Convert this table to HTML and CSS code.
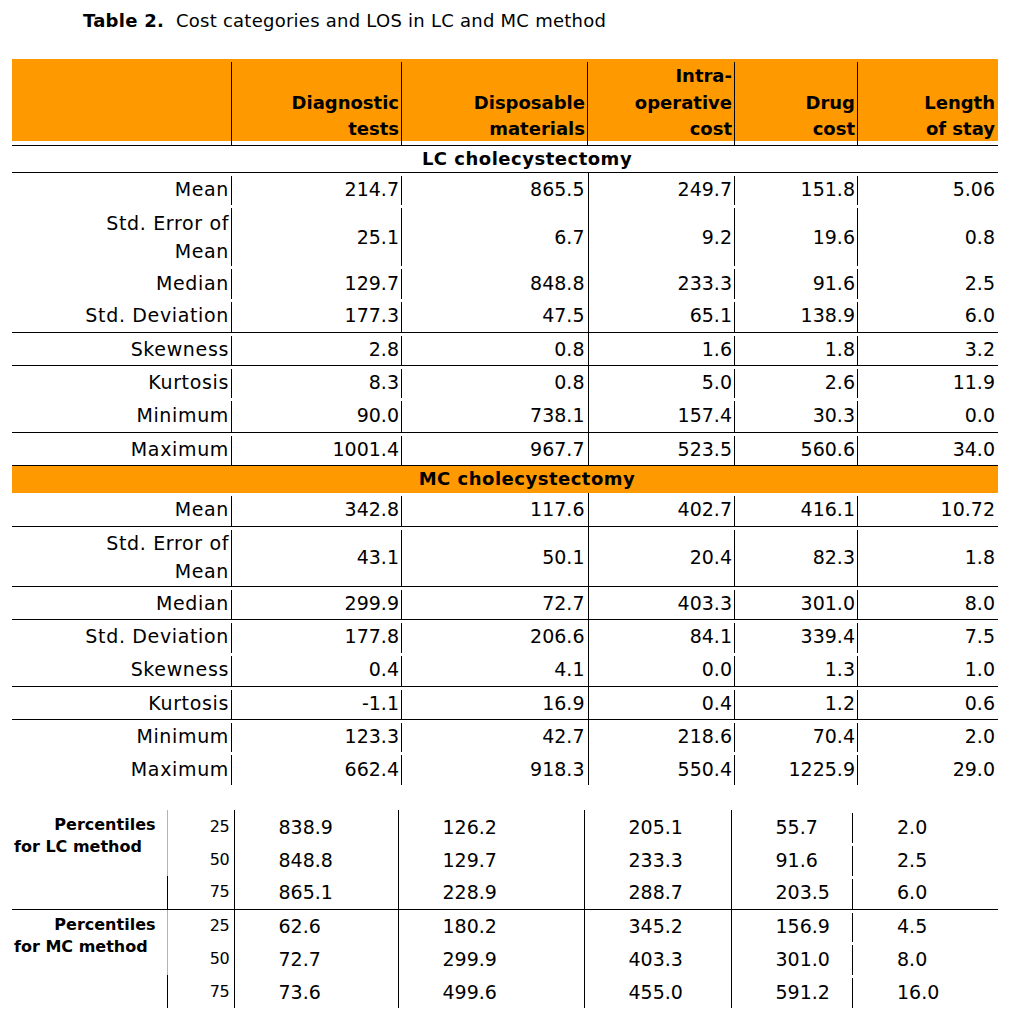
FILE: index.html
```html
<!DOCTYPE html>
<html>
<head>
<meta charset="utf-8">
<title>Table 2</title>
<link rel="stylesheet" href="styles.css">
</head>
<body>
<div class="page">
  <p class="caption"><b>Table 2.</b>&nbsp; Cost categories and LOS in LC and MC method</p>

  <table class="stats">
    <colgroup>
      <col class="w1"><col class="w2"><col class="w3"><col class="w4"><col class="w5"><col class="w6">
    </colgroup>
    <thead>
      <tr>
        <th></th>
        <th>Diagnostic<br>tests</th>
        <th>Disposable<br>materials</th>
        <th>Intra-<br>operative<br>cost</th>
        <th>Drug<br>cost</th>
        <th>Length<br>of stay</th>
      </tr>
    </thead>
    <tbody>
      <tr class="group rule"><td colspan="6">LC cholecystectomy</td></tr>
      <tr><td>Mean</td><td>214.7</td><td>865.5</td><td>249.7</td><td>151.8</td><td>5.06</td></tr>
      <tr class="tall lc"><td>Std. Error of<br>Mean</td><td>25.1</td><td>6.7</td><td>9.2</td><td>19.6</td><td>0.8</td></tr>
      <tr><td>Median</td><td>129.7</td><td>848.8</td><td>233.3</td><td>91.6</td><td>2.5</td></tr>
      <tr class="rule"><td>Std. Deviation</td><td>177.3</td><td>47.5</td><td>65.1</td><td>138.9</td><td>6.0</td></tr>
      <tr class="rule"><td>Skewness</td><td>2.8</td><td>0.8</td><td>1.6</td><td>1.8</td><td>3.2</td></tr>
      <tr><td>Kurtosis</td><td>8.3</td><td>0.8</td><td>5.0</td><td>2.6</td><td>11.9</td></tr>
      <tr class="rule h34"><td>Minimum</td><td>90.0</td><td>738.1</td><td>157.4</td><td>30.3</td><td>0.0</td></tr>
      <tr class="rule"><td>Maximum</td><td>1001.4</td><td>967.7</td><td>523.5</td><td>560.6</td><td>34.0</td></tr>
      <tr class="group orange"><td colspan="6">MC cholecystectomy</td></tr>
      <tr class="rule"><td>Mean</td><td>342.8</td><td>117.6</td><td>402.7</td><td>416.1</td><td>10.72</td></tr>
      <tr class="tall rule"><td>Std. Error of<br>Mean</td><td>43.1</td><td>50.1</td><td>20.4</td><td>82.3</td><td>1.8</td></tr>
      <tr class="rule"><td>Median</td><td>299.9</td><td>72.7</td><td>403.3</td><td>301.0</td><td>8.0</td></tr>
      <tr class="h34"><td>Std. Deviation</td><td>177.8</td><td>206.6</td><td>84.1</td><td>339.4</td><td>7.5</td></tr>
      <tr class="rule"><td>Skewness</td><td>0.4</td><td>4.1</td><td>0.0</td><td>1.3</td><td>1.0</td></tr>
      <tr class="rule"><td>Kurtosis</td><td>-1.1</td><td>16.9</td><td>0.4</td><td>1.2</td><td>0.6</td></tr>
      <tr><td>Minimum</td><td>123.3</td><td>42.7</td><td>218.6</td><td>70.4</td><td>2.0</td></tr>
      <tr><td>Maximum</td><td>662.4</td><td>918.3</td><td>550.4</td><td>1225.9</td><td>29.0</td></tr>
    </tbody>
  </table>

  <table class="pct">
    <colgroup>
      <col class="p1"><col class="p2"><col class="p3"><col class="p4"><col class="p5"><col class="p6"><col class="p7">
    </colgroup>
    <tbody>
      <tr>
        <td class="label" rowspan="2"><span class="l1">Percentiles</span><span class="l2">for LC method</span></td>
        <td class="q">25</td><td class="v full">838.9</td><td class="v full">126.2</td><td class="v full">205.1</td><td class="v seg">55.7</td><td class="v">2.0</td>
      </tr>
      <tr>
        <td class="q">50</td><td class="v full">848.8</td><td class="v full">129.7</td><td class="v full">233.3</td><td class="v seg">91.6</td><td class="v">2.5</td>
      </tr>
      <tr class="rule">
        <td class="stub"></td>
        <td class="q">75</td><td class="v full">865.1</td><td class="v full">228.9</td><td class="v full">288.7</td><td class="v seg">203.5</td><td class="v">6.0</td>
      </tr>
      <tr>
        <td class="label" rowspan="2"><span class="l1">Percentiles</span><span class="l2">for MC method</span></td>
        <td class="q">25</td><td class="v full">62.6</td><td class="v full">180.2</td><td class="v full">345.2</td><td class="v seg">156.9</td><td class="v">4.5</td>
      </tr>
      <tr>
        <td class="q">50</td><td class="v full">72.7</td><td class="v full">299.9</td><td class="v full">403.3</td><td class="v seg">301.0</td><td class="v">8.0</td>
      </tr>
      <tr>
        <td class="stub"></td>
        <td class="q">75</td><td class="v full">73.6</td><td class="v full">499.6</td><td class="v full">455.0</td><td class="v seg">591.2</td><td class="v">16.0</td>
      </tr>
    </tbody>
  </table>
</div>
</body>
</html>
```

FILE: styles.css
```css
html, body {
  margin: 0;
  padding: 0;
  background: #fff;
}

body {
  font-family: "DejaVu Sans", "Liberation Sans", sans-serif;
  color: #000;
}

.page {
  width: 986px;
  padding: 0 12px;
}

.caption {
  margin: 0;
  padding: 10px 0 0 71px;
  height: 59px;
  box-sizing: border-box;
  font-size: 18px;
  line-height: 22px;
  letter-spacing: 0.25px;
}

/* main statistics table */
.stats {
  width: 986px;
  border-collapse: collapse;
  border-spacing: 0;
  table-layout: fixed;
  font-size: 19px;
}

.w1 { width: 220px; }
.w2 { width: 170px; }
.w3 { width: 186px; }
.w4 { width: 147px; }
.w5 { width: 123px; }
.w6 { width: 140px; }

.stats th {
  height: 86px;
  padding: 0 3px 2px 0;
  box-sizing: border-box;
  text-align: right;
  vertical-align: bottom;
  font-size: 18px;
  font-weight: bold;
  line-height: 26.5px;
  border-bottom: 1px solid #000;
  background:
    linear-gradient(#000, #000) right bottom / 1px calc(100% - 3px) no-repeat,
    linear-gradient(#f90, #f90) left top / 100% calc(100% - 4px) no-repeat;
}

.stats th:last-child {
  background: linear-gradient(#f90, #f90) left top / 100% calc(100% - 4px) no-repeat;
}

.stats td {
  height: 33px;
  padding: 0 3px 0 0;
  box-sizing: border-box;
  text-align: right;
  vertical-align: middle;
  line-height: 28px;
  white-space: nowrap;
  background: linear-gradient(#000, #000) right bottom / 1px calc(100% - 3px) no-repeat;
}

.stats tr.h34 td {
  height: 34px;
}

.stats td:first-child {
  letter-spacing: 0.65px;
}

.stats td:nth-child(3) {
  background: none;
  border-right: 1px solid #000;
}

.stats td:last-child {
  background: none;
}

.stats tr.tall td {
  height: 60px;
  padding-top: 2px;
}

.stats tr.tall.lc td {
  height: 61px;
}

.stats tr.rule td {
  border-bottom: 1px solid #000;
}

.stats tr.group td {
  height: 27px;
  padding: 0 0 0 44px;
  text-align: center;
  font-size: 18px;
  font-weight: bold;
  letter-spacing: 0.5px;
  line-height: 26px;
  background: none;
  border-right: none;
}

.stats tr.group.orange td {
  height: 28px;
  background: #f90;
}

/* percentiles table */
.pct {
  margin-top: 25px;
  width: 986px;
  border-collapse: collapse;
  border-spacing: 0;
  table-layout: fixed;
  font-size: 19px;
}

.p1 { width: 155px; }
.p2 { width: 67px; }
.p3 { width: 164px; }
.p4 { width: 186px; }
.p5 { width: 147px; }
.p6 { width: 122px; }
.p7 { width: 145px; }

.pct td {
  height: 33px;
  padding: 0;
  box-sizing: border-box;
  vertical-align: middle;
  white-space: nowrap;
}

.pct tr.rule td {
  border-bottom: 1px solid #000;
}

.pct .label {
  vertical-align: top;
  padding: 4px 0 0 0;
  font-size: 16px;
  font-weight: bold;
  line-height: 22px;
  border-right: 1px solid #b4b4b4;
}

.pct .l1 {
  display: block;
  text-align: right;
  padding-right: 11px;
}

.pct .l2 {
  display: block;
  text-align: left;
  padding-left: 2px;
}

.pct .stub {
  border-right: 1px solid #000;
}

.pct .q {
  text-align: right;
  padding: 0 4px 1px 0;
  font-size: 16px;
  letter-spacing: -0.3px;
  border-right: 1px solid #000;
}

.pct .v {
  text-align: left;
  padding-left: 44px;
}

.pct .v.full {
  border-right: 1px solid #000;
}

.pct .v.seg {
  background: linear-gradient(#000, #000) right bottom / 1px calc(100% - 3px) no-repeat;
}
```
